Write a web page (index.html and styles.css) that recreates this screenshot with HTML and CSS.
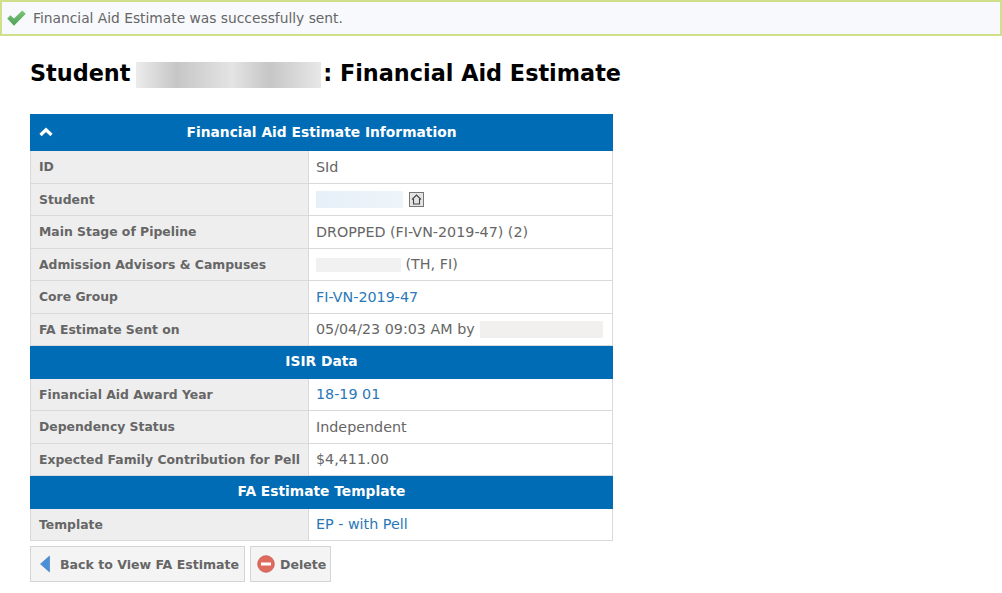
FILE: index.html
```html
<!DOCTYPE html>
<html lang="en">
<head>
<meta charset="utf-8">
<title>Financial Aid Estimate</title>
<link rel="stylesheet" href="styles.css">
</head>
<body>
<div class="notice">
  <svg class="notice-icon" width="19" height="16" viewBox="0 0 19 16"><defs><linearGradient id="g" x1="0" y1="0" x2="0" y2="1"><stop offset="0" stop-color="#7cc77c"/><stop offset="1" stop-color="#4f9f55"/></linearGradient></defs><path d="M.2 8.5 L3.4 5.2 L7 8.6 L15.2 .4 L18.8 3.8 L7 15.8 Z" fill="url(#g)"/></svg>
  <span>Financial Aid Estimate was successfully sent.</span>
</div>
<main class="content">
  <h1 class="title">Student <span class="redact redact-title"></span>: Financial Aid Estimate</h1>
  <table class="info">
    <colgroup><col class="col-k"><col class="col-v"></colgroup>
    <tr class="head head-first"><th colspan="2"><svg class="chev" width="14" height="10" viewBox="0 0 14 10"><path d="M1.5 8 L7 2.8 L12.5 8" fill="none" stroke="#fff" stroke-width="3.2"/></svg>Financial Aid Estimate Information</th></tr>
    <tr><td class="k">ID</td><td class="v">SId</td></tr>
    <tr><td class="k">Student</td><td class="v"><span class="redact redact-blue"></span><svg class="home" width="15" height="15" viewBox="0 0 15 15"><rect x=".5" y=".5" width="14" height="14" fill="#e4e4e4" stroke="#777"/><path d="M3 7.5 L7.5 3 L12 7.5 M4.5 7 V12 H10.5 V7" fill="none" stroke="#444" stroke-width="1.1"/></svg></td></tr>
    <tr><td class="k">Main Stage of Pipeline</td><td class="v">DROPPED (FI-VN-2019-47) (2)</td></tr>
    <tr><td class="k">Admission Advisors &amp; Campuses</td><td class="v"><span class="redact redact-grey"></span> (TH, FI)</td></tr>
    <tr><td class="k">Core Group</td><td class="v"><a href="#">FI-VN-2019-47</a></td></tr>
    <tr><td class="k">FA Estimate Sent on</td><td class="v">05/04/23 09:03 AM by<span class="redact redact-by"></span></td></tr>
    <tr class="head"><th colspan="2">ISIR Data</th></tr>
    <tr><td class="k">Financial Aid Award Year</td><td class="v"><a href="#">18-19 01</a></td></tr>
    <tr><td class="k">Dependency Status</td><td class="v">Independent</td></tr>
    <tr><td class="k">Expected Family Contribution for Pell</td><td class="v">$4,411.00</td></tr>
    <tr class="head"><th colspan="2">FA Estimate Template</th></tr>
    <tr><td class="k">Template</td><td class="v"><a href="#">EP - with Pell</a></td></tr>
  </table>
  <div class="actions">
    <a class="btn btn-back" href="#"><svg width="12" height="18" viewBox="0 0 12 18"><path d="M10.5 1 V17 L1.5 9 Z" fill="#4a8fd8" stroke="#3a78c0" stroke-width=".6"/></svg>Back to View FA Estimate</a>
    <a class="btn btn-del" href="#"><svg width="18" height="18" viewBox="0 0 18 18"><circle cx="9" cy="9" r="8.3" fill="#df6a5e" stroke="#c9584d" stroke-width=".8"/><rect x="4" y="7.5" width="10" height="3" fill="#fff"/></svg>Delete</a>
  </div>
</main>
</body>
</html>
```
FILE: styles.css
```css
html, body { margin: 0; padding: 0; background: #fff; }
body { font-family: "DejaVu Sans", Verdana, sans-serif; font-size: 13px; color: #666; overflow: hidden; }
.notice {
  box-sizing: border-box; height: 36px; display: flex; align-items: center; gap: 7px;
  padding-left: 5px; background: #f7f9fc; border: 2px solid #cfe08a; color: #666;
  font-size: 13.8px;
}
.notice-icon { flex: none; }
.content { padding: 0 30px; }
.title { margin: 21px 0 25px; height: 32px; line-height: 32px; font-size: 22.35px; font-weight: bold; color: #000; white-space: nowrap; }
.redact { display: inline-block; vertical-align: middle; }
.redact-title { width: 185px; height: 26px; margin: 0 2px 0 -2px; background: linear-gradient(90deg, #ececec, #c6c6c6 22%, #e4e4e4 52%, #c6c6c6 72%, #e8e8e8); }
.redact-blue { width: 87px; height: 17px; background: linear-gradient(90deg, #e6f0f8, #eef4f9); margin-right: 6px; }
.redact-grey { width: 85px; height: 14px; background: #f1f1f1; }
.redact-by { width: 123px; height: 17px; background: #f1f0ee; margin-left: 5px; }
.info { border-collapse: collapse; width: 583px; table-layout: fixed; }
.col-k { width: 278px; }
.head th { background: #006cb5; color: #fff; font-size: 13.8px; font-weight: bold; height: 30.5px; padding: 0 0 1px; text-align: center; position: relative; border: 1px solid #006cb5; }
.head-first th { height: 34px; }
.chev { position: absolute; left: 8px; top: 12px; }
.k, .v { border: 1px solid #d9d9d9; height: 31.5px; }
.k { padding: 0 8px; background: #eee; font-weight: bold; font-size: 12.4px; color: #666; white-space: nowrap; }
.v { padding: 0 7px; color: #666; font-size: 14.3px; background: #fff; white-space: nowrap; }
.home { vertical-align: middle; }
a { color: #2a78b8; text-decoration: none; }
.actions { display: flex; gap: 5px; margin-top: 5px; }
.btn {
  box-sizing: border-box; height: 36px; display: flex; align-items: center;
  background: #f4f4f4; border: 1px solid #d5d5d5;
  color: #666; font-weight: bold; font-size: 12.55px;
}
.btn-back { width: 215px; gap: 9px; padding-left: 8px; }
.btn-del { width: 81px; gap: 5px; padding-left: 6px; }
```
